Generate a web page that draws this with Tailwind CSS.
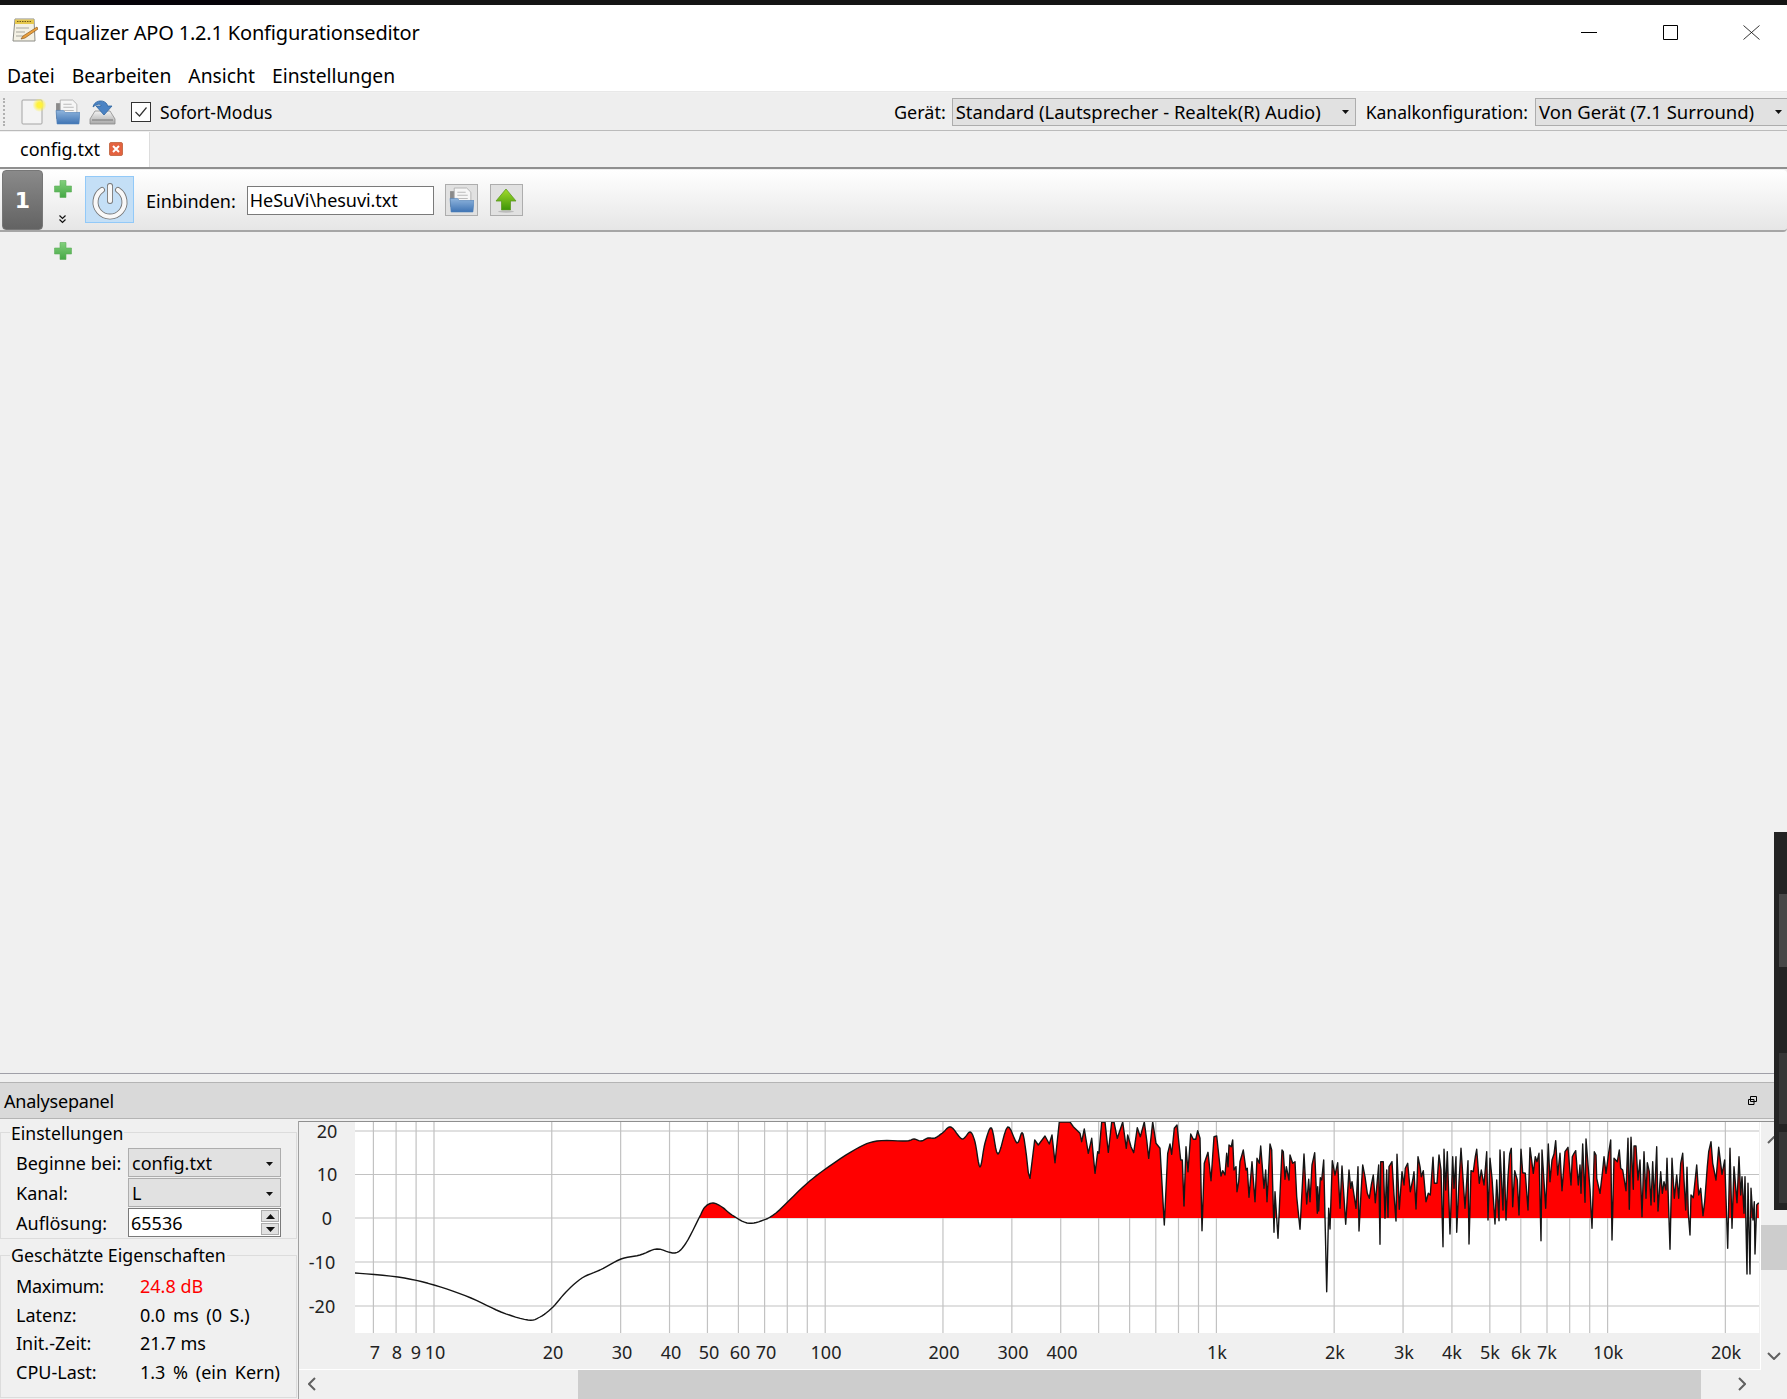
<!DOCTYPE html>
<html lang="de">
<head>
    <meta charset="UTF-8">
    <title>Equalizer APO 1.2.1 Konfigurationseditor</title>
    <script src="https://cdn.jsdelivr.net/npm/@tailwindcss/browser@4"></script>
</head>
<body class="relative w-[1787px] h-[1399px] overflow-hidden flex flex-col bg-[#f0f0f0] text-black text-[18px] [font-family:'Noto_Sans',sans-serif]">
    <!-- shared gradients and icons -->
    <svg width="0" height="0" class="absolute">
        <defs>
            <linearGradient id="folderBlue" x1="0" y1="0" x2="0" y2="1"><stop offset="0" stop-color="#8fb4dc"/><stop offset="1" stop-color="#3f74b4"/></linearGradient>
            <linearGradient id="plusGreen" x1="0" y1="0" x2="0" y2="1"><stop offset="0" stop-color="#82cf7c"/><stop offset="1" stop-color="#45a845"/></linearGradient>
            <linearGradient id="arrowGreen" x1="0" y1="0" x2="0" y2="1"><stop offset="0" stop-color="#a4dc2c"/><stop offset="1" stop-color="#3d9408"/></linearGradient>
            <linearGradient id="driveGrey" x1="0" y1="0" x2="0" y2="1"><stop offset="0" stop-color="#f2f2f2"/><stop offset="1" stop-color="#a8a8a8"/></linearGradient>
            <radialGradient id="glow"><stop offset="0.35" stop-color="#fff23c"/><stop offset="1" stop-color="#fff23c" stop-opacity="0"/></radialGradient>
            <symbol id="folder" viewBox="0 0 24 25">
                <path d="M1 4h8v15H1z" fill="#8a8a8a"/>
                <path d="M5 1h12l4 4v10H5z" fill="#f6f6f6" stroke="#aaa" stroke-width="0.8"/>
                <path d="M8 5h8M8 8h10M8 11h10" stroke="#bbb"/>
                <path d="M1 11h7l2 2h14l-1 11H2z" fill="url(#folderBlue)" stroke="#4d7fb8" stroke-width="0.6"/>
            </symbol>
            <symbol id="plus" viewBox="0 0 18 18">
                <path d="M6 .5h6v5.5h5.5v6H12v5.500H6V12H.5V6H6z" fill="url(#plusGreen)" stroke="#5fae5c" stroke-width="0.6"/>
            </symbol>
        </defs>
    </svg>

    <div class="h-[5px] shrink-0 flex bg-[#141414]">
        <div class="ml-[90px] w-[170px] bg-[#050208]"></div>
    </div>

    <!-- title bar -->
    <div class="h-[51px] shrink-0 bg-white flex items-center pl-[12px] pt-[6px]">
        <svg width="26" height="26" viewBox="0 0 26 26" class="mb-[6px]">
            <path d="M3 1h19l1 22H1z" fill="#f4f1e4" stroke="#8c8c86"/>
            <path d="M3 1.500h19V6H3z" fill="#e6c84e"/>
            <path d="M5 3.500h15" stroke="#6e5a1c" stroke-dasharray="1.500 1"/>
            <path d="M4 10h13M4 14h9M4 18h7" stroke="#a8a89e" stroke-width="1.200"/>
            <path d="M25 9l-14 9-2 3 4-1 13-9z" fill="#eca13e" stroke="#8a5a20" stroke-width="0.700"/>
        </svg>
        <span class="ml-[6px] text-[20px] mt-[-1px] [letter-spacing:-0.18px]">Equalizer APO 1.2.1 Konfigurationseditor</span>
        <div class="ml-auto flex items-start h-[15px] mb-[3px]">
            <svg width="16" height="15" class="mr-[65px]"><path d="M0 7.500h16" stroke="#000"/></svg>
            <svg width="16" height="15" class="mr-[65px]"><path d="M1.500.5h14v14h-14z" fill="none" stroke="#000"/></svg>
            <svg width="17" height="15" class="mr-[27px]"><path d="M.5.500l16 14M16.500.500l-16 14" stroke="#000" stroke-width="0.800"/></svg>
        </div>
    </div>

    <!-- menu -->
    <div class="h-[36px] shrink-0 bg-white flex items-center pl-[7px] pt-[6px] gap-[17px] text-[19.3px] border-b border-[#e8e8e8]">
        <span>Datei</span><span>Bearbeiten</span><span>Ansicht</span><span>Einstellungen</span>
    </div>

    <!-- toolbar -->
    <div class="h-[38px] shrink-0 mt-[1px] flex items-center bg-[#eeeeee] border-b border-[#bbbbbb] pt-[1px]">
        <div class="ml-[3px] w-[3px] h-[28px] border-l-2 border-dotted border-[#b0b0b0]"></div>
        <svg width="25" height="26" viewBox="0 0 25 26" class="ml-[15px]">
            <rect x="1" y="1" width="20" height="24" rx="1" fill="#f4f4f4" stroke="#a4a4a4"/>
            <circle cx="18.500" cy="6" r="7" fill="url(#glow)"/>
        </svg>
        <svg width="25" height="26" class="ml-[9px]"><use href="#folder"/></svg>
        <svg width="27" height="26" viewBox="0 0 27 26" class="ml-[9px]">
            <path d="M6 12l-5 8v5h25v-5l-5-8z" fill="url(#driveGrey)" stroke="#8c8c8c" stroke-width="0.800"/>
            <path d="M3 21h21" stroke="#777"/>
            <path d="M4 8C5 2 13 0 17 4c1 1 1.500 2 1.500 3H23l-8 9-8-9h5c0-2-3-3-8 1z" fill="#4b83c4" stroke="#2f659f" stroke-width="0.800"/>
        </svg>
        <div class="ml-[15px] w-[20px] h-[20px] border border-[#333333] bg-white flex items-center justify-center">
            <svg width="14" height="12"><path d="M1.500 6l4 4 7-8.500" fill="none" stroke="#333" stroke-width="1.200"/></svg>
        </div>
        <span class="ml-[9px] text-[17.5px]">Sofort-Modus</span>
        <span class="ml-auto">Gerät:</span>
        <div class="ml-[6px] w-[404px] h-[28px] shrink-0 flex items-center justify-between pl-[3px] pr-[6px] bg-[#e1e1e1] border border-[#adadad]">
            <span class="text-[18.4px]">Standard (Lautsprecher - Realtek(R) Audio)</span>
            <svg width="7" height="4"><path d="M0 0h7L3.500 4z" fill="#111"/></svg>
        </div>
        <span class="ml-[10px] text-[17.5px]">Kanalkonfiguration:</span>
        <div class="ml-[7px] w-[252px] h-[28px] shrink-0 flex items-center justify-between pl-[3px] pr-[5px] bg-[#e1e1e1] border border-[#adadad] border-r-0">
            <span class="text-[18.5px]">Von Gerät (7.1 Surround)</span>
            <svg width="7" height="4"><path d="M0 0h7L3.500 4z" fill="#111"/></svg>
        </div>
    </div>

    <!-- tab strip -->
    <div class="h-[36px] shrink-0 flex items-center">
        <div class="w-[150px] h-full mt-[1px] bg-white flex items-center pl-[20px] border-r border-[#dddddd]">
            <span>config.txt</span>
            <svg width="14" height="14" viewBox="0 0 14 14" class="ml-[9px] mb-[2px]">
                <rect x="0.500" y="0.500" width="13" height="13" rx="1.500" fill="#e4623f" stroke="#c8704e"/>
                <path d="M4 4l6 6M10 4l-6 6" stroke="#fff" stroke-width="2"/>
            </svg>
        </div>
    </div>
    <div class="h-[2px] shrink-0 bg-[#8f8f8f]"></div>

    <!-- filter row -->
    <div class="h-[62px] shrink-0 mt-[1px] flex items-stretch pl-[2px] rounded-tr-[4px] rounded-br-[4px] bg-gradient-to-b from-white to-[#e6e6e6] border-b-2 border-[#a6a6a6]">
        <div class="w-[41px] flex items-center justify-center rounded-[4px] bg-gradient-to-b from-[#8a8a8a] to-[#636363] border border-[#777777] text-white text-[22px] font-bold [font-family:'DejaVu_Sans',sans-serif]">1</div>
        <div class="w-[42px] relative flex flex-col items-center pt-[10px] pr-[3px]">
            <svg width="18" height="18"><use href="#plus"/></svg>
            <svg width="7" height="9" viewBox="0 0 7 9" class="mt-[17px]"><path d="M.5.500l3 3 3-3M.5 4.500l3 3 3-3" fill="none" stroke="#111" stroke-width="1.200"/></svg>
        </div>
        <div class="w-[49px] h-[47px] mt-[6px] flex items-center justify-center bg-[#c4dff6] border border-[#92c9f8]">
            <svg width="38" height="40" viewBox="0 0 38 40">
                <path d="M11 10a14.500 14.500 0 1 0 16 0" fill="none" stroke="#777" stroke-width="6" stroke-linecap="round"/>
                <path d="M11 10a14.500 14.500 0 1 0 16 0" fill="none" stroke="#f8f8f8" stroke-width="4.200" stroke-linecap="round"/>
                <path d="M19 6v15" fill="none" stroke="#777" stroke-width="6" stroke-linecap="round"/>
                <path d="M19 6v15" fill="none" stroke="#f8f8f8" stroke-width="4.200" stroke-linecap="round"/>
            </svg>
        </div>
        <span class="self-center ml-[12px] mt-[2px]">Einbinden:</span>
        <div class="self-center ml-[11px] w-[187px] h-[29px] flex items-center pl-[2px] bg-white border border-[#7a7a7a] [letter-spacing:-0.05px]">HeSuVi\hesuvi.txt</div>
        <div class="self-center ml-[11px] w-[33px] h-[32px] flex items-center justify-center bg-[#e1e1e1] border border-[#adadad]">
            <svg width="25" height="26"><use href="#folder"/></svg>
        </div>
        <div class="self-center ml-[12px] w-[33px] h-[32px] flex items-center justify-center bg-[#e1e1e1] border border-[#adadad]">
            <svg width="22" height="25" viewBox="0 0 22 25"><path d="M11 1l10 12h-5.500v9h-9v-9H1z" fill="url(#arrowGreen)" stroke="#5d9a22" stroke-width="0.800"/><ellipse cx="11" cy="23.500" rx="8" ry="1.200" fill="#bbb"/></svg>
        </div>
    </div>

    <!-- empty editor area -->
    <div class="flex-1 pl-[54px] pt-[10px]">
        <svg width="18" height="18"><use href="#plus"/></svg>
    </div>

    <!-- analysis panel -->
    <div class="h-[326px] shrink-0 flex flex-col">
        <div class="h-px bg-[#a0a0a8]"></div>
        <div class="h-[8px]"></div>
        <div class="h-[37px] flex items-center justify-between pl-[4px] pr-[30px] bg-[#d9d9d9] border-t border-b border-[#b4b4b4]">
            <span class="mt-[2px] [letter-spacing:-0.2px]">Analysepanel</span>
            <svg width="9" height="9" viewBox="0 0 9 9"><path d="M2.500.5h6v5h-6zM.5 3.500h5.500v5H.5z" fill="#d9d9d9" stroke="#000"/></svg>
        </div>
        <div class="flex-1 flex">
            <!-- settings column -->
            <div class="w-[298px] shrink-0 flex flex-col pt-[1px]">
                <fieldset class="h-[119px] w-[297px] border border-[#dcdcdc]">
                    <legend class="ml-[9px] px-[1px] h-[24px] leading-[26px] text-[17.6px]">Einstellungen</legend>
                    <div class="grid grid-cols-[127px_153px] gap-y-[1px] pt-[4px] items-center">
                        <span class="pl-[15px] pt-[2px]">Beginne bei:</span>
                        <div class="h-[29px] flex items-center justify-between pl-[3px] pr-[7px] pt-[2px] bg-[#e1e1e1] border border-[#adadad]">
                            <span>config.txt</span>
                            <svg width="7" height="4"><path d="M0 0h7L3.500 4z" fill="#111"/></svg>
                        </div>
                        <span class="pl-[15px] pt-[2px]">Kanal:</span>
                        <div class="h-[29px] flex items-center justify-between pl-[3px] pr-[7px] pt-[2px] bg-[#e1e1e1] border border-[#adadad]">
                            <span>L</span>
                            <svg width="7" height="4"><path d="M0 0h7L3.500 4z" fill="#111"/></svg>
                        </div>
                        <span class="pl-[15px] pt-[2px]">Auflösung:</span>
                        <div class="h-[29px] flex items-center justify-between pl-[2px] pr-[1px] bg-white border border-[#7a7a7a]">
                            <span class="mt-[2px]">65536</span>
                            <div class="flex flex-col gap-[1px]">
                                <div class="w-[18px] h-[12px] flex items-center justify-center bg-[#e1e1e1] border border-[#adadad]"><svg width="9" height="5"><path d="M0 5h9L4.500 0z" fill="#111"/></svg></div>
                                <div class="w-[18px] h-[12px] flex items-center justify-center bg-[#e1e1e1] border border-[#adadad]"><svg width="9" height="5"><path d="M0 0h9L4.500 5z" fill="#111"/></svg></div>
                            </div>
                        </div>
                    </div>
                </fieldset>
                <fieldset class="mt-[4px] h-[155px] w-[297px] border border-[#dcdcdc]">
                    <legend class="ml-[9px] px-[1px] h-[24px] leading-[24px] text-[17.8px]">Geschätzte Eigenschaften</legend>
                    <div class="grid grid-cols-[139px_1fr] auto-rows-[28.75px] items-center pt-[5px]">
                        <span class="pl-[15px] [letter-spacing:-0.3px]">Maximum:</span><span class="text-[#ff0000]">24.8 dB</span>
                        <span class="pl-[15px]">Latenz:</span><span class="[word-spacing:3px]">0.0 ms (0 S.)</span>
                        <span class="pl-[15px]">Init.-Zeit:</span><span>21.7 ms</span>
                        <span class="pl-[15px]">CPU-Last:</span><span class="[word-spacing:3px]">1.3 % (ein Kern)</span>
                    </div>
                </fieldset>
            </div>

            <!-- plot and its scrollbars -->
            <div class="flex-1 flex flex-col border-l border-[#a0a0a0] mt-[2px]">
                <div class="h-[248px] flex border-t border-[#8f8f8f]">
                    <svg id="plot" width="1461" height="247" viewBox="299 1122 1461 247" class="block shrink-0 border-b border-r border-white box-content">
                        <rect x="299" y="1122" width="56" height="247" fill="#f0f0f0"/>
                        <rect x="355" y="1333" width="1404" height="36" fill="#f0f0f0"/>
                        <rect x="355" y="1122" width="1404" height="211" fill="#fff"/>
                        <g id="grid" stroke="#c2c2c2" stroke-width="1.200"></g>
                        <path id="fill" fill="#ff0000" clip-path="url(#above)"></path>
                        <clipPath id="above"><rect x="355" y="1122" width="1404" height="96"/></clipPath>
                        <clipPath id="plotArea"><rect x="355" y="1122" width="1404" height="211"/></clipPath>
                        <path id="curve" fill="none" stroke="#151515" stroke-width="1.400" stroke-linejoin="round" clip-path="url(#plotArea)"></path>
                        <g fill="#222" font-size="18" text-anchor="middle">
                            <text x="327" y="1138">20</text><text x="327" y="1181">10</text><text x="327" y="1225">0</text><text x="322" y="1269">-10</text><text x="322" y="1313">-20</text>
                            <text x="375" y="1359">7</text><text x="397" y="1359">8</text><text x="416" y="1359">9</text><text x="435" y="1359">10</text>
                            <text x="553" y="1359">20</text><text x="622" y="1359">30</text><text x="671" y="1359">40</text><text x="709" y="1359">50</text><text x="740" y="1359">60</text><text x="766" y="1359">70</text>
                            <text x="826" y="1359">100</text><text x="944" y="1359">200</text><text x="1013" y="1359">300</text><text x="1062" y="1359">400</text>
                            <text x="1217" y="1359">1k</text><text x="1335" y="1359">2k</text><text x="1404" y="1359">3k</text><text x="1452" y="1359">4k</text><text x="1490" y="1359">5k</text><text x="1521" y="1359">6k</text><text x="1547" y="1359">7k</text>
                            <text x="1608" y="1359">10k</text><text x="1726" y="1359">20k</text>
                        </g>
                    </svg>
                    <div class="flex-1 flex flex-col items-center justify-between pt-[14px] pb-[9px] relative">
                        <svg width="14" height="8"><path d="M1 7l6-6 6 6" fill="none" stroke="#606060" stroke-width="2"/></svg>
                        <div class="absolute left-0 right-0 top-[103px] h-[45px] bg-[#cdcdcd]"></div>
                        <svg width="14" height="8"><path d="M1 1l6 6 6-6" fill="none" stroke="#606060" stroke-width="2"/></svg>
                    </div>
                </div>
                <div class="flex-1 flex items-center relative pl-[9px]">
                    <svg width="8" height="14"><path d="M7 1L1 7l6 6" fill="none" stroke="#606060" stroke-width="2"/></svg>
                    <div class="absolute left-[279px] top-[1px] bottom-0 w-[1123px] bg-[#cdcdcd]"></div>
                    <svg width="8" height="14" class="ml-[1422px]"><path d="M1 1l6 6-6 6" fill="none" stroke="#606060" stroke-width="2"/></svg>
                </div>
            </div>
        </div>
    </div>

    <!-- dark window edge lying over the right side -->
    <div class="absolute left-[1774px] top-[832px] w-[13px] h-[378px] bg-[#232323]">
        <div class="absolute left-[5px] right-0 top-[62px] h-[73px] bg-[#474747]"></div>
        <div class="absolute left-[5px] right-0 top-[221px] h-[71px] bg-[#363636]"></div>
        <div class="absolute left-[5px] right-0 top-[300px] h-[71px] bg-[#363636]"></div>
    </div>

    <script>
        const svgNS = 'http://www.w3.org/2000/svg';

        // grid lines, log scale: 391.2 px per decade, 10 Hz at x=434
        const freqX = f => 434 + 391.2 * (Math.log10(f) - 1);
        const grid = document.getElementById('grid');
        function addLine(x1, y1, x2, y2) {
            const l = document.createElementNS(svgNS, 'line');
            l.setAttribute('x1', x1); l.setAttribute('y1', y1);
            l.setAttribute('x2', x2); l.setAttribute('y2', y2);
            grid.appendChild(l);
        }
        [1131, 1174.5, 1218, 1262, 1306].forEach(y => addLine(355, y, 1759, y));
        [1, 10, 100, 1000].forEach(dec => {
            for (let m = 1; m < 10; m++) {
                const x = freqX(m * dec * 10);
                if (x <= 1759) addLine(x, 1122, x, 1333);
            }
        });
        [7, 8, 9].forEach(f => addLine(freqX(f), 1122, freqX(f), 1333));

        // response curve, traced in page pixels up to x=1030
        const low = [[355,1273],[398,1277],[434,1285],[471,1298],[501,1312],[528,1320],[540,1317],[553,1307],[566,1292],[582,1278],[600,1270],[621,1259],[640,1255],[657,1249],[675,1253],[686,1243],[699.5,1217],[705,1207],[713,1203],[722,1207],[732,1215],[747,1223],[761,1221],[776,1213],[803,1187],[824,1170],[856,1149],[877,1141],[906,1141],[914,1139],[921,1141],[928,1138],[935,1138],[942.5,1133],[951,1127],[962,1139],[970,1132],[975,1142],[980,1167],[985,1143],[991.5,1128],[998,1154],[1007.6,1127],[1017,1143],[1023,1134],[1029,1178]];
        // round off the traced low end (Catmull-Rom), the real curve is smooth there
        const smooth = [];
        for (let i = 0; i < low.length - 1; i++) {
            const a = low[Math.max(i - 1, 0)], b = low[i], c = low[i + 1], e = low[Math.min(i + 2, low.length - 1)];
            for (let s = 0; s < 6; s++) {
                const t = s / 6, t2 = t * t, t3 = t2 * t;
                smooth.push([0, 1].map(k => 0.5 * (2 * b[k] + (c[k] - a[k]) * t + (2 * a[k] - 5 * b[k] + 4 * c[k] - e[k]) * t2 + (3 * b[k] - a[k] - 3 * c[k] + e[k]) * t3)));
            }
        }
        // the rest was traced from 3x crops: [originX, originY, points]
        const crops = [
            [1030, 1120, [0,175,14,60,25,75,45,48,58,72,66,45,75,128,88,6,120,6,130,20,150,40,155,65,163,27,175,100,185,55,195,160,203,95,207,100,215,6,225,6,235,97,245,6,252,6,262,55,278,6,289,85,293,45,303,80,311,98,322,23,331,50,343,6,350,60,356,115,368,6,378,70,390,85,403,315,413,100,420,72,425,103,433,25,441,15,452,120,457,120,462,258,468,80,474,155,482,42,490,58,497,58,503,32,510,55,516,332,523,130,534,97,543,182,552,50,560,48,573,168,578,152,585,165,590,100,594,140,597,75,604,80,608,60,612,150,618,140,621,215,626,185,630,125,640,90,648,150,652,145,657,232,666,125,675,245,681,115,688,130,692,78,702,205,707,150,711,245,720,72,725,90,732,337,735,215,744,355,756,90,760,95,765,178,769,140,777,180]],
            [1280, 1130, [30,75,38,100,45,95,50,200,60,298,72,72,80,222,86,148,90,215,96,105,104,68,112,250,113,170,116,243,121,143,125,150,131,90,140,485,146,235,150,297,157,92,165,135,173,98,180,235,186,108,197,283,207,120,212,175,216,155,222,195,228,235,234,110,237,303,243,190,248,105,255,140,262,190,268,205,274,165,280,135,286,218,296,105,300,343,302,95,310,95,315,265,320,120,324,262,327,110,336,95,342,195,348,273,351,73,358,238,366,125,372,165,376,115,383,100,391,185,398,150,402,125,408,237,414,80,420,110,424,140,430,122,438,215,445,190,451,195,459,82,463,160,471,160,477,75,483,120,489,350,492,58,497,180,502,65,510,312,518,80,522,175,528,80,530,307,537,155,543,55,555,235,564,92,567,342,573,122,580,125,586,80,590,58,598,160,604,120,612,165,620,65,624,270,630,85,636,145,645,282,650,150,657,272,660,60,669,240,672,65,678,270,684,140,689,72,694,55,698,230,704,122,712,150,717,255,723,58,728,128,736,130,744,240,750,53,760,130,766,80,771,95,777,70]],
            [1530, 1130, [33,332,36,60,47,235,55,42,60,155,66,90,72,72,77,32,83,135,90,70,96,182,105,65,114,52,123,165,127,80,132,70,137,62,145,165,150,105,153,190,158,42,165,217,168,27,175,115,180,178,186,295,193,65,198,75,200,145,210,190,218,120,222,80,228,130,236,68,242,30,246,330,252,85,262,95,268,60,272,115,278,120,288,182,294,25,298,238,303,22,310,178,312,48,318,48,324,150,330,90,336,260,342,65,348,205,352,98,358,125,363,225,368,95,373,215,380,50,384,243,392,125,397,190,402,155,408,180,411,85,420,358,426,85,433,205,440,135,446,205,452,100,458,70,462,150,467,240,471,112,475,250,480,315,483,195,490,203,500,105,506,195,512,175,519,257,524,215,532,110,536,65,543,35,548,100,558,150,566,52,576,133,584,90,593,355,600,55,606,295,612,110,621,218,627,80,632,195,636,140,642,250,645,140,651,432,654,160,660,432,663,175,669,270,673,215,675,372,680,225,686,218]]
        ];
        const pts = smooth;
        crops.forEach(([ox, oy, p]) => {
            for (let i = 0; i < p.length; i += 2) pts.push([ox + p[i] / 3, oy + p[i + 1] / 3]);
        });
        const d = pts.map(p => p[0].toFixed(1) + ' ' + p[1].toFixed(1)).join(' L');
        document.getElementById('curve').setAttribute('d', 'M' + d);
        document.getElementById('fill').setAttribute('d', 'M355 1218 L' + d + ' L1759 1218 Z');
    </script>
</body>
</html>
